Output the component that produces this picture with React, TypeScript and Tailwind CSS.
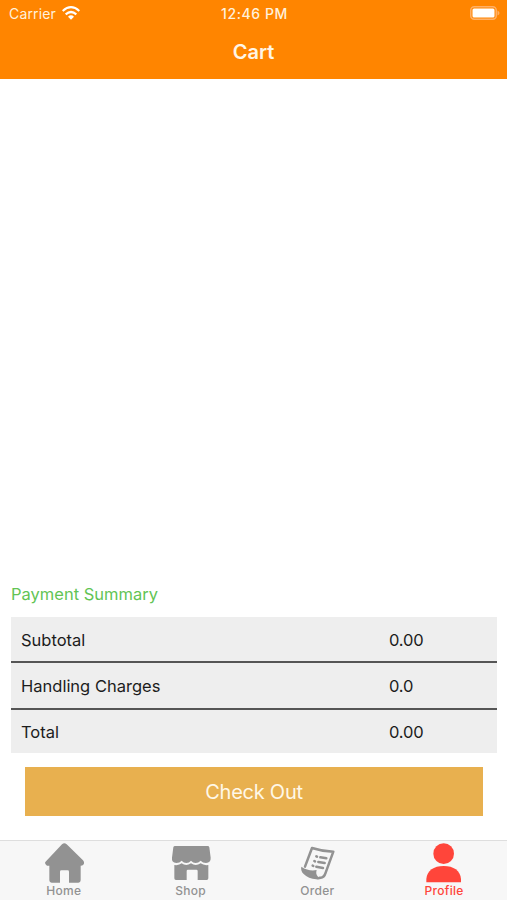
import type { ReactNode } from 'react';

const summary = [
    { label: 'Subtotal', value: '0.00', height: 'h-[46px]' },
    { label: 'Handling Charges', value: '0.0', height: 'h-[47px]' },
    { label: 'Total', value: '0.00', height: 'h-[43px]' },
];

function TabIcon({ children }: { children: ReactNode }) {
    return (
        <svg viewBox="0 0 120 120" className="w-10 h-10 block" fill="currentColor">
            {children}
        </svg>
    );
}

function HomeIcon() {
    return (
        <TabIcon>
            <path d="M54 4Q61 -2 68 4L117 52Q123 59 118 65Q115 68 110 68V112Q110 119 103 119H75V86Q75 82 71 82H52Q48 82 48 86V119H23Q16 119 16 112V68H9Q1 63 4 57Z" />
        </TabIcon>
    );
}

function ShopIcon() {
    return (
        <TabIcon>
            <path d="M12 9H110Q114 9 115 13L119 44Q120 58 105 60Q95 60 89 53Q82 60 74 60Q66 60 60 53Q54 60 46 60Q38 60 32 53Q26 60 16 60Q1 58 3 44L7 13Q8 9 12 9Z" />
            <path d="M10 66Q24 68 32 61Q45 71 60 61Q74 71 89 61Q98 68 112 66V106Q112 111 107 111H80V84Q80 80 76 80H51Q47 80 47 84V111H15Q10 111 10 106Z" />
        </TabIcon>
    );
}

function OrderIcon() {
    return (
        <TabIcon>
            <g fill="none" stroke="currentColor" strokeLinecap="round" strokeLinejoin="round" strokeWidth="7.5">
                <path d="M24 71L45 15Q75 25 109 26L86 89Q81 106 68 104" />
                <path d="M58 40L60 41M70 43L88 46M52 54L54 55M64 57L83 60M47 68L49 69M58 71L78 75" />
            </g>
            <path d="M13 71Q36 86 59 81Q55 94 63 101Q69 105 76 103Q71 112 58 109Q34 107 20 93Q10 83 13 71Z" />
        </TabIcon>
    );
}

function ProfileIcon() {
    return (
        <TabIcon>
            <circle cx="59" cy="32" r="31" />
            <path d="M7 118V108C9 83 29 69 59 69S109 83 111 108V118Z" />
        </TabIcon>
    );
}

const tabs = [
    { name: 'Home', icon: <HomeIcon />, active: false },
    { name: 'Shop', icon: <ShopIcon />, active: false },
    { name: 'Order', icon: <OrderIcon />, active: false },
    { name: 'Profile', icon: <ProfileIcon />, active: true },
];

function StatusBar() {
    return (
        <div className="grid grid-cols-3 items-center h-7 pl-[9px] pr-[7px] text-[#fff1dc]">
            <div className="flex items-center gap-1.5">
                <span className="text-sm tracking-[0.15px]">Carrier</span>
                <svg viewBox="0 0 54 42" className="w-[18px] h-3.5 -mt-0.5" fill="none" stroke="white" strokeWidth="6.5">
                    <path d="M2 15Q27 -8 52 15M11 25Q27 11 43 25" />
                    <path d="M18 32Q27 24 36 32L27 41Z" fill="white" stroke="none" />
                </svg>
            </div>
            <span className="text-center text-sm font-medium tracking-[0.6px]">12:46 PM</span>
            <svg viewBox="0 0 30 14" className="w-[30px] h-3.5 -mt-0.5 justify-self-end">
                <rect x="0.75" y="0.75" width="25.5" height="12.5" rx="3.5" fill="none" stroke="#ffb066" strokeWidth="1.5" />
                <rect x="2.5" y="2.5" width="22" height="9" rx="1.5" fill="white" />
                <path d="M27.5 4.5Q29.5 5.5 29.5 7T27.5 9.5Z" fill="#ffb066" />
            </svg>
        </div>
    );
}

export default function App() {
    return (
        <div className="flex flex-col w-full h-screen bg-white font-['Inter','Liberation_Sans',sans-serif] overflow-hidden">
            <header className="h-[79px] shrink-0 bg-[#ff8500]">
                <StatusBar />
                <h1 className="text-center text-xl leading-[49px] font-semibold text-[#fff5e6]">Cart</h1>
            </header>

            <main className="flex-1 flex flex-col justify-end">
                <section className="pl-[11px] pr-2.5">
                    <h2 className="text-[16.5px] leading-6 mb-[11px] text-[#62c454]">Payment Summary</h2>
                    <div className="divide-y-2 divide-[#555555] bg-[#eeeeee]">
                        {summary.map(row => (
                            <div
                                key={row.label}
                                className={`flex items-center pl-2.5 pt-0.5 text-[16.5px] text-[#1c1c1c] ${row.height}`}
                            >
                                <span className="w-[368px]">{row.label}</span>
                                <span className="tracking-[-0.2px]">{row.value}</span>
                            </div>
                        ))}
                    </div>
                </section>
                <button className="h-[49px] mt-3.5 mb-6 ml-[25px] mr-[24px] bg-[#e8b04f] text-[20px] tracking-[-0.25px] text-[#fff8e8] pt-px">
                    Check Out
                </button>
            </main>

            <nav className="grid grid-cols-4 h-[60px] shrink-0 border-t border-[#dedede] bg-[#f7f7f7]">
                {tabs.map(tab => (
                    <div
                        key={tab.name}
                        className={`flex flex-col items-center pt-0.5 pl-px ${tab.active ? 'text-[#ff453a]' : 'text-[#929292]'}`}
                    >
                        {tab.icon}
                        <span className="text-xs leading-4 font-medium tracking-[0.3px]">{tab.name}</span>
                    </div>
                ))}
            </nav>
        </div>
    );
}
